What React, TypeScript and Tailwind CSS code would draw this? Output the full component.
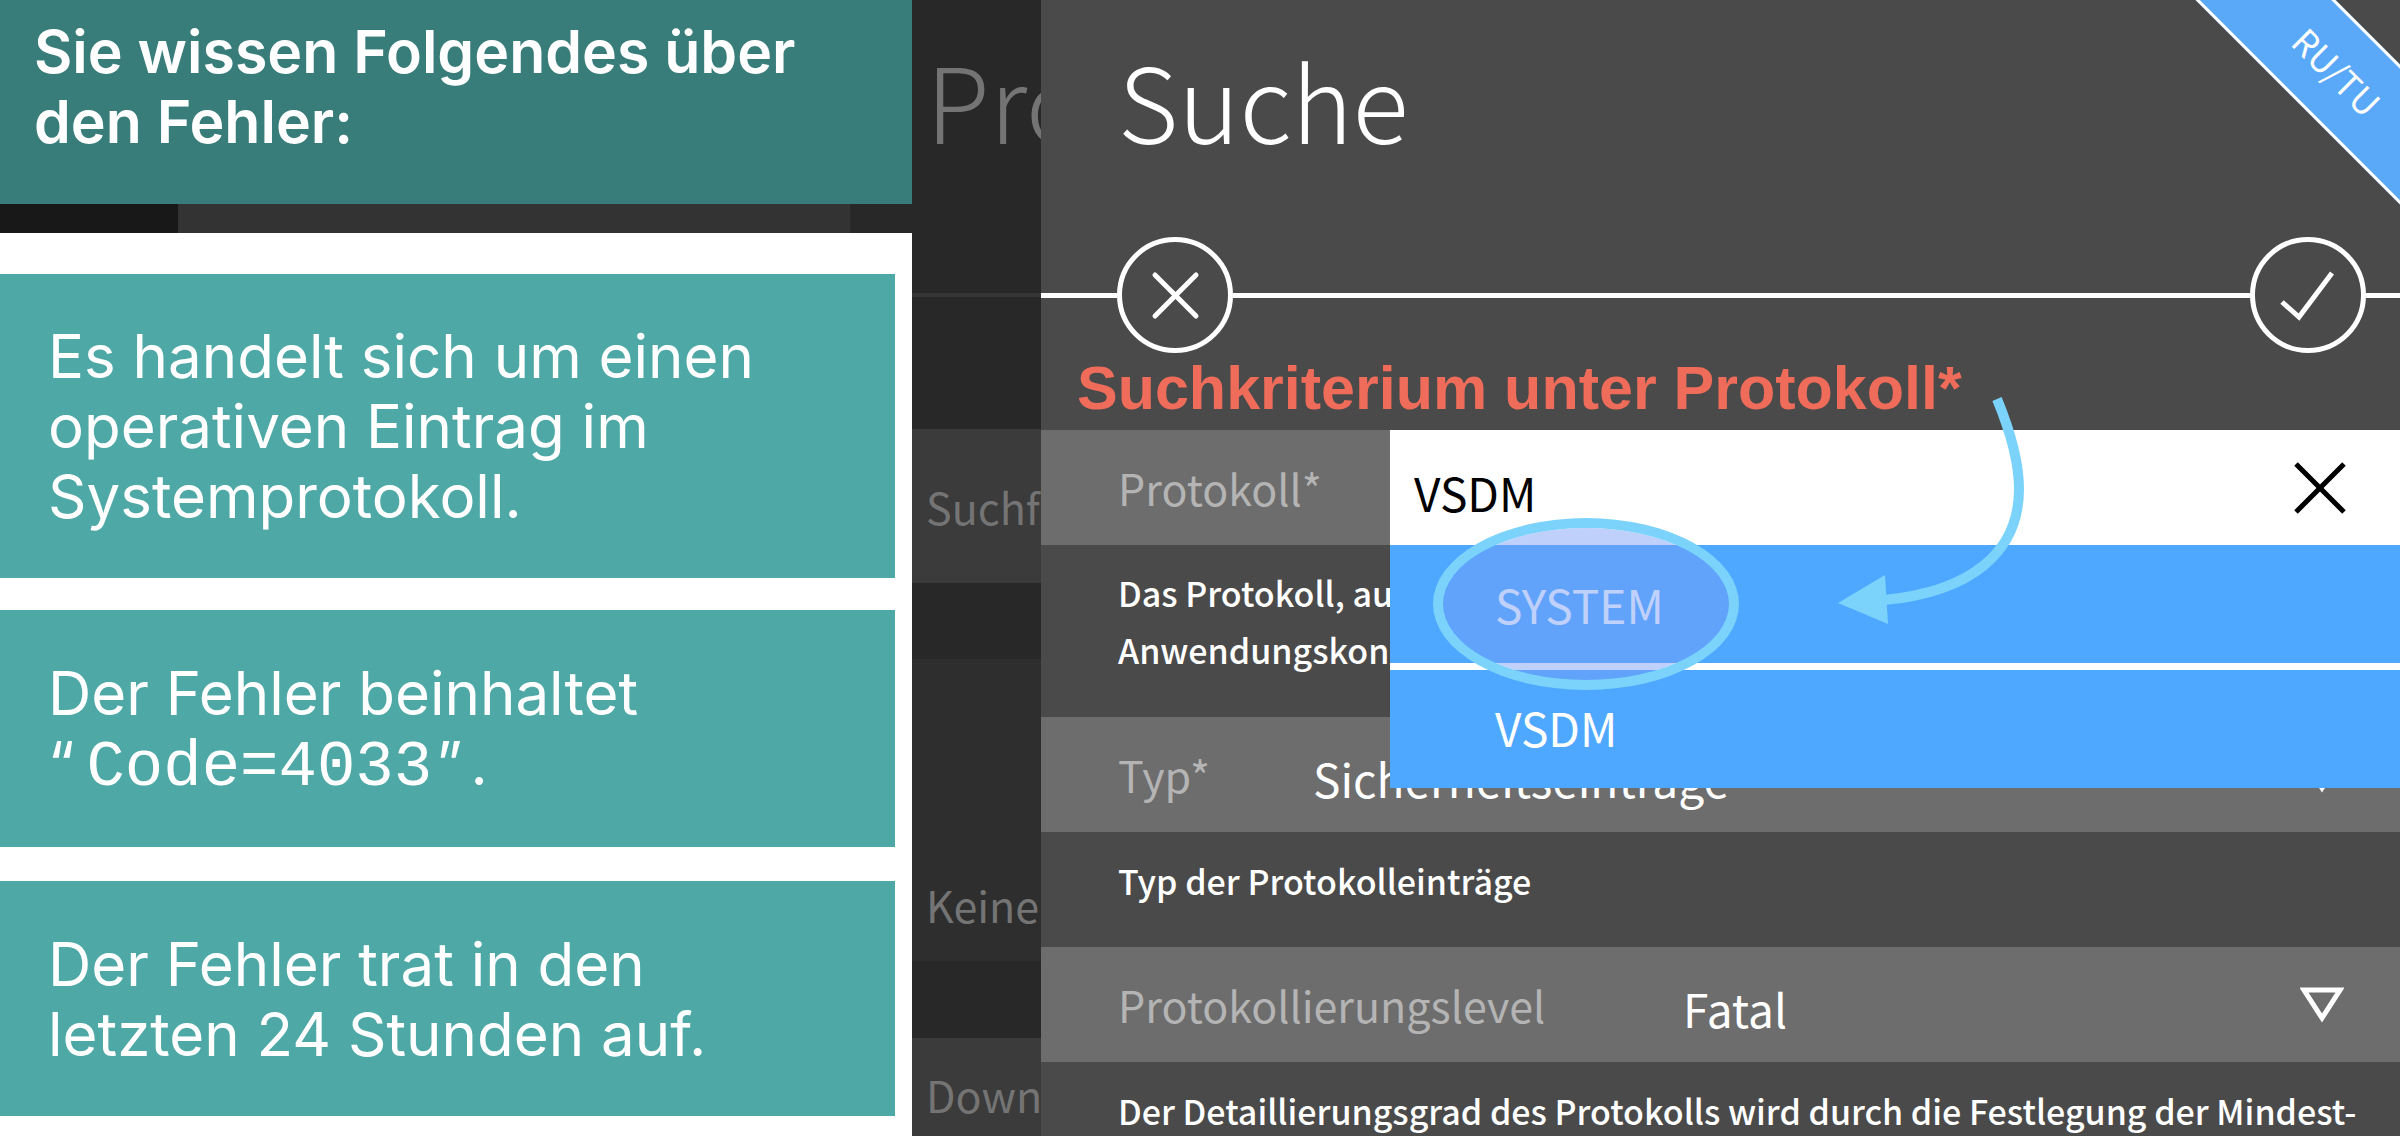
import type { ReactNode } from "react";

const sans = "font-['Noto_Sans_CJK_SC',sans-serif]";

function FactCard({ className, children }: { className: string; children: ReactNode }) {
  return (
    <li className={`mr-[17px] flex flex-col justify-center bg-[#4ea8a6] pl-12 text-[60px] leading-[70px] text-white ${className}`}>
      {children}
    </li>
  );
}

function Facts() {
  return (
    <section className="flex w-[38%] shrink-0 flex-col font-['Inter',sans-serif] whitespace-nowrap">
      <h1 className="h-[204px] bg-[#397d7b] pt-[17px] pl-[34px] text-[59px] leading-[70px] font-semibold text-white">
        Sie wissen Folgendes über
        <br />
        den Fehler:
      </h1>
      <div className="flex h-[29px] bg-[#282828]">
        <div className="w-[178px] bg-[#181818]" />
        <div className="mr-[62px] flex-1 bg-[#333333]" />
      </div>
      <ul className="flex flex-1 flex-col bg-white pt-[41px]">
        <FactCard className="mb-8 h-[304px]">
          <p>
            Es handelt sich um einen
            <br />
            operativen Eintrag im
            <br />
            Systemprotokoll.
          </p>
        </FactCard>
        <FactCard className="mb-[34px] h-[237px]">
          <p>
            Der Fehler beinhaltet
            <br />
            “<code className="mr-1 ml-3 font-['Liberation_Mono',monospace] text-[64px] leading-[64px]">Code=4033</code>”<span className="ml-2">.</span>
          </p>
        </FactCard>
        <FactCard className="mb-5 h-[235px]">
          <p>
            Der Fehler trat in den
            <br />
            letzten 24 Stunden auf.
          </p>
        </FactCard>
      </ul>
    </section>
  );
}

function Background() {
  return (
    <aside className={`flex w-[129px] shrink-0 flex-col overflow-hidden bg-[#282828] whitespace-nowrap text-[#747474] ${sans}`}>
      <div className="h-[293px] pt-[22px] pl-3.5 text-[104px] leading-[154px] font-light">Protokoll</div>
      <div className="mb-[132px] h-1 bg-[#353535]" />
      <div className="flex h-[154px] items-center bg-[#3b3b3b] pl-3.5 text-[43px]">Suchfilter</div>
      <div className="mt-[76px] flex h-[302px] flex-col justify-end bg-[#2e2e2e] pb-[26px] pl-3.5 text-[43px] leading-[62px]">Keine Einträge</div>
      <div className="mt-[77px] flex-1 bg-[#3b3b3b] pt-[25px] pl-3.5 text-[43px] leading-[62px]">Download</div>
    </aside>
  );
}

function Toolbar() {
  return (
    <div className="flex h-[118px] items-center">
      <div className="h-[5px] w-[76px] bg-white" />
      <button type="button" aria-label="Abbrechen" className="size-[116px] shrink-0 rounded-full border-[5px] border-white">
        <svg viewBox="0 0 106 106" fill="none" stroke="white" strokeWidth="5" strokeLinecap="round">
          <path d="M33 33 74 74M74 33 33 74" />
        </svg>
      </button>
      <div className="h-[5px] flex-1 bg-white" />
      <button type="button" aria-label="Übernehmen" className="size-[116px] shrink-0 rounded-full border-[5px] border-white">
        <svg viewBox="0 0 106 106" fill="none" stroke="white" strokeWidth="5">
          <path d="M27 60 44 75 77 31" />
        </svg>
      </button>
      <div className="h-[5px] w-[34px] bg-white" />
    </div>
  );
}

function SelectRow({ id, label, value, labelWidth }: { id: string; label: string; value: string; labelWidth: string }) {
  return (
    <div className="relative flex h-[115px] items-center bg-[#6d6d6d]">
      <label htmlFor={id} className={`shrink-0 pl-[77px] text-[43px] text-[#b4b4b4] ${labelWidth}`}>
        {label}
      </label>
      <select id={id} defaultValue={value} className="h-full flex-1 appearance-none bg-transparent pt-2 text-[46px] text-white">
        <option>{value}</option>
      </select>
      <svg className="pointer-events-none absolute right-[56px] h-[36px] w-[44px]" viewBox="0 0 44 36" fill="none" stroke="white" strokeWidth="5">
        <path d="M4 3H40L22 31Z" />
      </svg>
    </div>
  );
}

function ProtocolRow() {
  return (
    <div className="relative z-10 flex h-[115px] items-center bg-[#6d6d6d]">
      <label htmlFor="protokoll" className="w-[349px] shrink-0 pl-[77px] text-[43px] text-[#b4b4b4]">
        Protokoll*
      </label>
      <div className="relative h-full flex-1">
        <input id="protokoll" role="combobox" aria-expanded="true" aria-controls="protokolle" defaultValue="VSDM" className="h-full w-full bg-white pt-2 pl-6 text-[46px] text-black" />
        <button type="button" aria-label="Leeren" className="absolute top-[30px] right-[52px] size-[56px]">
          <svg viewBox="0 0 56 56" stroke="black" strokeWidth="5">
            <path d="M4 4 52 52M52 4 4 52" />
          </svg>
        </button>
        <ul id="protokolle" role="listbox" className="absolute inset-x-0 top-full flex flex-col gap-[7px] bg-white text-[46px] leading-[67px] text-white">
          <li role="option" aria-selected="false" className="flex h-[118px] items-center bg-[#4ea8ff] pl-[105px]">
            SYSTEM
          </li>
          <li role="option" aria-selected="true" className="flex h-[118px] items-center bg-[#4ea8ff] pb-1 pl-[105px]">
            VSDM
          </li>
        </ul>
        <div className="absolute top-[88px] left-[43px] h-[172px] w-[306px] rounded-[50%] border-[10px] border-[#7bd3fb] bg-[#779df6]/47 bg-clip-padding" />
        <svg className="pointer-events-none absolute top-[-37px] left-[440px] h-[240px] w-[200px]" viewBox="0 0 200 240" fill="none">
          <path d="M167 6C181 40 189 70 189 96C189 160 140 199 54 207" stroke="#7bd3fb" strokeWidth="10" />
          <path d="M8 210 55 182 58 231Z" fill="#7bd3fb" />
        </svg>
      </div>
    </div>
  );
}

function SearchPanel() {
  return (
    <main className={`relative min-w-0 flex-1 overflow-hidden bg-[#4a4a4a] whitespace-nowrap ${sans}`}>
      <h2 className="h-[236px] pt-[22px] pl-[77px] text-[104px] leading-[154px] font-light text-white">Suche</h2>
      <div className="absolute top-[22px] right-[-137px] flex h-[99px] w-[400px] rotate-45 items-center justify-center border-y-[3px] border-white bg-[#5aa8f8] text-[35px] text-white">
        RU/TU
      </div>
      <Toolbar />
      <p className="h-[76px] pl-9 font-['Liberation_Sans',sans-serif] text-[61px] leading-[69px] font-bold text-[#ee6c59]">
        Suchkriterium unter Protokoll*
      </p>
      <ProtocolRow />
      <p className="h-[172px] pt-[19px] pl-[77px] text-[34px] leading-[57px] font-medium text-white">
        Das Protokoll, aus dem
        <br />
        Anwendungskonnektor
      </p>
      <SelectRow id="typ" label="Typ*" value="Sicherheitseinträge" labelWidth="w-[272px]" />
      <p className="h-[115px] pt-5 pl-[77px] text-[34px] leading-[57px] font-medium text-white">Typ der Protokolleinträge</p>
      <SelectRow id="level" label="Protokollierungslevel" value="Fatal" labelWidth="w-[642px]" />
      <p className="pt-5 pl-[77px] text-[34px] leading-[57px] font-medium text-white">
        Der Detaillierungsgrad des Protokolls wird durch die Festlegung der Mindest-
      </p>
    </main>
  );
}

export default function App() {
  return (
    <div className="flex min-h-screen overflow-hidden bg-[#282828]">
      <Facts />
      <Background />
      <SearchPanel />
    </div>
  );
}
